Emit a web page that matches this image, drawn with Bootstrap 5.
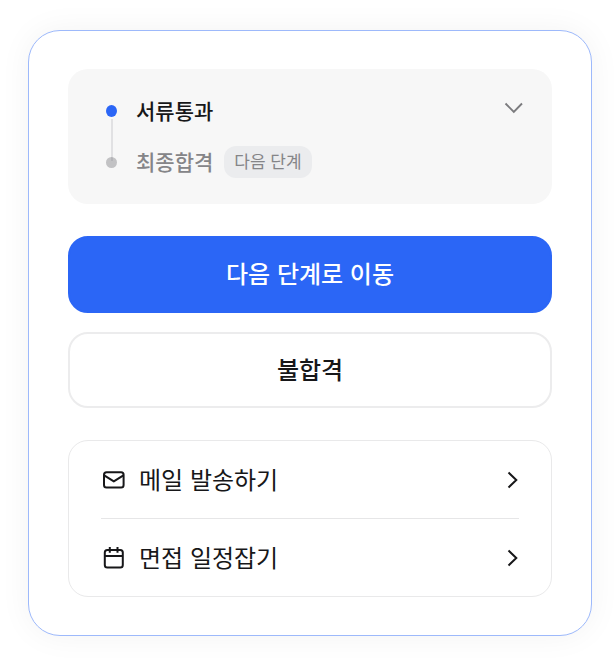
<!DOCTYPE html>
<html lang="ko">
<head>
<meta charset="utf-8">
<meta name="viewport" content="width=device-width, initial-scale=1">
<title>지원자 단계 관리</title>
<link href="https://cdn.jsdelivr.net/npm/bootstrap@5.3.0/dist/css/bootstrap.min.css" rel="stylesheet">
<style>
  body {
    font-family: "Noto Sans CJK KR", sans-serif;
    color: #171719;
    padding: 30px 22px 22px 28px;
  }
  .panel {
    padding: 38px 39px;
    border: 1px solid #9db9fb;
    border-radius: 32px;
    box-shadow: 0 0 32px rgba(0, 0, 0, .05);
  }
  .stage-box {
    background: #f7f7f7;
    border-radius: 20px;
    padding: 26px 28px 26px 38px;
    margin-bottom: 32px;
  }
  .stages { gap: 19px; font-size: 21px; font-weight: 500; line-height: 30px; }
  .stages li { gap: 19px; }
  .stages li + li { color: #858588; }
  .stage-name, .next-chip { padding-bottom: 2px; }
  .dot { width: 11px; height: 12px; border-radius: 50%; background: #2b66f6; position: relative; }
  .dot-next { height: 11px; background: #c2c2c4; }
  .dot-next::before {
    content: "";
    position: absolute;
    left: 5px;
    bottom: 7px;
    width: 2px;
    height: 42px;
    background: rgba(112, 115, 124, .16);
  }
  .next-chip {
    background: #ebecee;
    border-radius: 12px;
    padding-left: 10px;
    padding-right: 10px;
    margin-left: -8px;
    font-size: 17px;
    font-weight: 400;
  }
  .toggle-btn { padding: 7px 0; line-height: 0; color: #7b7b7e; }
  .action-btn {
    border-radius: 20px;
    font-size: 24px;
    font-weight: 500;
    line-height: 36px;
    padding: 17px 16px 19px;
    border-width: 2px;
  }
  .action-main { padding-bottom: 20px; --bs-btn-bg: #2b66f6; --bs-btn-border-color: #2b66f6; --bs-btn-color: #fff; --bs-btn-hover-bg: #1f57df; --bs-btn-hover-color: #fff; }
  .action-fail { --bs-btn-border-color: #ececed; --bs-btn-color: #171719; --bs-btn-hover-bg: #f7f7f7; }
  .actions { gap: 19px; margin-bottom: 32px; }
  .menu-box { border: 1px solid #e9e9ea; border-radius: 20px; padding: 0 32px; }
  .menu-row { height: 77px; font-size: 24px; line-height: 36px; gap: 13px; color: inherit; }
  .menu-row span { padding-bottom: 2px; }
  .menu-box li + li { border-top: 1px solid #e6e6e7; }
  svg { fill: none; stroke: currentColor; flex-shrink: 0; }
</style>
</head>
<body>
<main class="panel bg-white">
  <section class="stage-box d-flex justify-content-between align-items-start">
    <ul class="stages list-unstyled d-flex flex-column mb-0">
      <li class="d-flex align-items-center"><span class="dot"></span><span class="stage-name">서류통과</span></li>
      <li class="d-flex align-items-center"><span class="dot dot-next"></span><span class="stage-name">최종합격</span><span class="next-chip">다음 단계</span></li>
    </ul>
    <button type="button" class="btn border-0 toggle-btn" aria-label="단계 펼치기">
      <svg width="20" height="12" viewBox="0 0 20 12" stroke-width="1.9"><path d="M1.5 1.5 9.8 9.8 18 1.5"/></svg>
    </button>
  </section>

  <div class="actions d-grid">
    <button type="button" class="btn action-btn action-main">다음 단계로 이동</button>
    <button type="button" class="btn action-btn action-fail">불합격</button>
  </div>

  <ul class="menu-box list-unstyled mb-0">
    <li>
      <a href="#mail" class="menu-row d-flex align-items-center text-decoration-none">
        <svg width="25" height="24" viewBox="0 0 25 24" stroke-width="2" stroke-linejoin="round"><rect x="3" y="4.2" width="19.6" height="15.2" rx="2.5"/><path d="m3.2 7.4 9.6 6 9.6-6"/></svg>
        <span class="flex-grow-1">메일 발송하기</span>
        <svg width="12" height="20" viewBox="0 0 12 20" stroke-width="2"><path d="m1.5 2.5 7.8 7.5-7.8 7.5"/></svg>
      </a>
    </li>
    <li>
      <a href="#schedule" class="menu-row d-flex align-items-center text-decoration-none">
        <svg width="25" height="24" viewBox="0 0 25 24" stroke-width="2"><rect x="3.8" y="4" width="18" height="17.6" rx="2.5"/><path d="M3.8 10h18M8.8 1v5.8M16.5 1v5.8"/></svg>
        <span class="flex-grow-1">면접 일정잡기</span>
        <svg width="12" height="20" viewBox="0 0 12 20" stroke-width="2"><path d="m1.5 2.5 7.8 7.5-7.8 7.5"/></svg>
      </a>
    </li>
  </ul>
</main>
<script src="https://cdn.jsdelivr.net/npm/bootstrap@5.3.0/dist/js/bootstrap.bundle.min.js"></script>
</body>
</html>
